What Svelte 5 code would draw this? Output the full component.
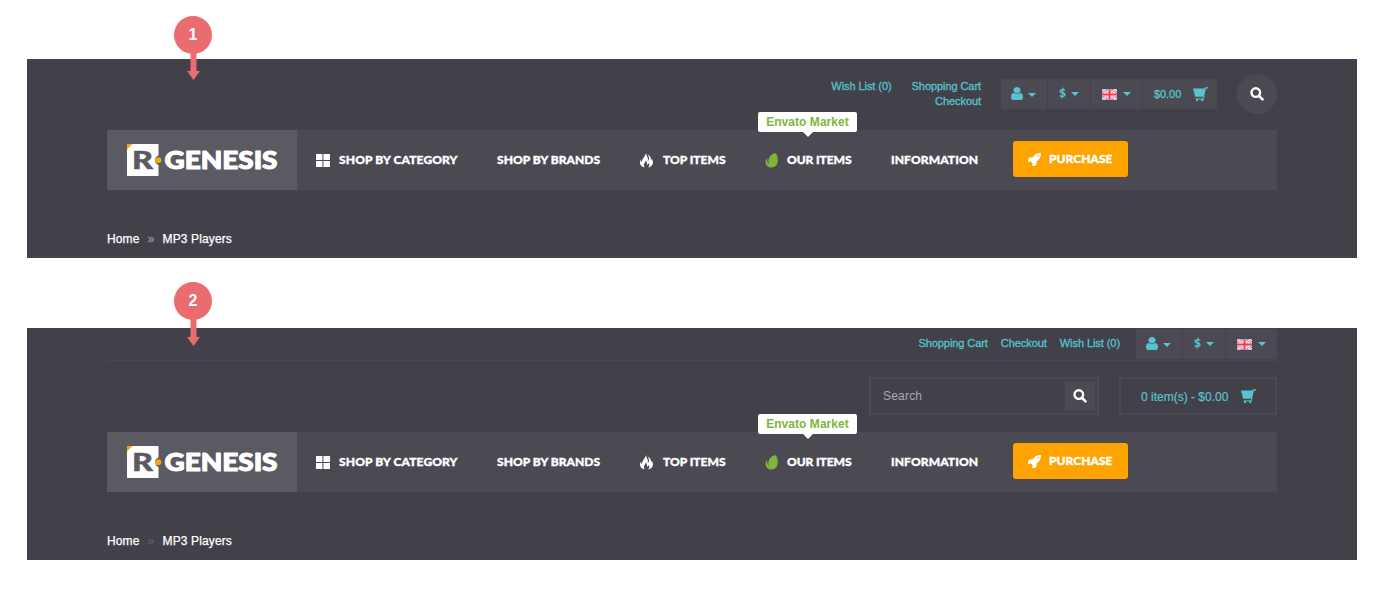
<script>
  const panels = [
    { id: 1, compact: true },
    { id: 2, compact: false }
  ];
  const nav = [
    { label: 'SHOP BY CATEGORY', icon: 'grid', width: 180, text: 118.500 },
    { label: 'SHOP BY BRANDS', width: 143, text: 103 },
    { label: 'TOP ITEMS', icon: 'fire', width: 125, text: 62.500 },
    { label: 'OUR ITEMS', icon: 'leaf', width: 126, text: 64.500, badge: 'Envato Market' },
    { label: 'INFORMATION', width: 127, text: 87 }
  ];
</script>

{#snippet search()}
  <svg class="search-icon" viewBox="0 0 14 14" width="14" height="14"><circle cx="5.800" cy="5.600" r="4.300" fill="none" stroke="#fff" stroke-width="2.400" /><path d="m9 8.900 3.500 3.500" stroke="#fff" stroke-width="2.700" stroke-linecap="round" /></svg>
{/snippet}

{#snippet cart()}
  <svg class="cart" viewBox="0 0 15 15" width="15" height="15">
    <path d="M0 1.500h11.300L12 .2h3v1.200h-2.100L11 9.800H2.200z" fill="#56c3ce" />
    <path d="M11 9 10.300 11.900H2.800" fill="none" stroke="#56c3ce" />
    <circle cx="4" cy="13" r="1.200" fill="#56c3ce" /><circle cx="9.300" cy="13" r="1.200" fill="#56c3ce" />
  </svg>
{/snippet}

{#snippet cells(compact)}
  <div class="cells">
    <div class="cell user">
      <svg viewBox="256 128 1280 1536" width="12" height="13" preserveAspectRatio="none"><path fill="#56c3ce" d="M1536 1399q0 109-62.500 187t-150.500 78h-854q-88 0-150.500-78t-62.500-187q0-85 8.500-160.500t31.500-152 58.500-131 94-89 134.500-34.500q131 128 313 128t313-128q76 0 134.500 34.500t94 89 58.500 131 31.500 152 8.500 160.500zm-256-887q0 159-112.500 271.500t-271.500 112.500-271.500-112.500-112.500-271.500 112.500-271.500 271.500-112.500 271.500 112.500 112.500 271.500z" /></svg>
      <i class="caret"></i>
    </div>
    <div class="cell money"><b>$</b><i class="caret"></i></div>
    <div class="cell lang">
      <svg class="flag" viewBox="0 0 15 11" width="15" height="11">
        <path fill="#8791dc" d="M0 0h15v11H0z" />
        <path stroke="#fff" stroke-width="2.600" d="m0 0 15 11M15 0 0 11" />
        <path stroke="#f56a70" stroke-width="1" d="m0 0 15 11M15 0 0 11" />
        <path stroke="#fde4e6" stroke-width="3.600" d="M7.500 0v11M0 5.500h15" />
        <path stroke="#fb3a40" stroke-width="2" d="M7.500 0v11M0 5.500h15" />
      </svg>
      <i class="caret"></i>
    </div>
    {#if compact}
      <div class="cell total"><span>$0.00</span>{@render cart()}</div>
    {/if}
  </div>
{/snippet}

{#snippet navIcon(name)}
  {#if name === 'grid'}
    <svg class="icon" viewBox="0 0 14 13" width="14" height="13"><path fill="#fff" d="M0 0h6.400v6H0zM7.400 0H14v6H7.400zM0 7h6.400v6H0zM7.400 7H14v6H7.400z" /></svg>
  {:else if name === 'fire'}
    <svg class="icon" viewBox="0 0 14 15" width="14" height="15"><path fill="#fff" d="M6.300 0c-.4 2.500 1.400 3.600 1.600 5.800.1 1-.1 1.800-.5 2.500 1.600-.9 2-2.900 1.200-4.700-.4-.9-.3-1.500 0-2 .4 1.400 2 2 2.300 3.700.1.800 0 1.400-.2 2 .8-.4 1.200-1 1.100-1.900 1.600 3 1.500 5.600-.3 7.400-1 1-2.300 1.600-3.700 1.800 1.600-1.200 2-3 1.100-4.700-.5 1-1.100 1.500-2.100 1.700.5-1.900.1-3.100-1.300-4.200.1 1.800-1 2.300-1.500 3.500-.5 1.300 0 2.500 1.200 3.400C2.500 14 .4 12.800.1 10.400-.1 9 .2 7.700.9 6.600c0 1.200.3 1.900 1 2.300 0-2 .9-3.200 1.900-4.500C4.900 3 5.300 1.600 6.300 0z" /></svg>
  {:else}
    <svg class="icon leaf" viewBox="0 0 14 15" width="14" height="15"><path fill="#80b53c" d="M10.700.4C8.700-.6 4.800 2.800 4 5c-.6 1.600-.8 3.500-.4 5.200.1.400-.2.500-.4.200C2.300 9.100 2 7.300 2.200 5.500c0-.4-.2-.5-.5-.1C.7 6.700.3 8.300.6 9.800c.5 3.100 2.900 4.900 6.100 4.800 3.400-.1 5.600-2.500 6-6C13.100 5.400 12.100 1.300 10.700.4z" /></svg>
  {/if}
{/snippet}

{#snippet navText(label, width)}
  <svg class="label" {width} height="16"><text x="0" y="12" textLength={width}>{label}</text></svg>
{/snippet}

<main>
  {#each panels as panel (panel.id)}
    <section class="panel" class:compact={panel.compact}>
      <div class="marker">
        <span>{panel.id}</span>
        <svg viewBox="0 0 13 28" width="13" height="28"><path fill="#ea6c6f" d="M3.500 0h6v19H13l-6.500 9L0 19h3.500z" /></svg>
      </div>
      <div class="inner">
        {#if panel.compact}
          <header class="top-compact">
            <span class="link">Wish List (0)</span>
            <div class="stack"><span class="link">Shopping Cart</span><span class="link">Checkout</span></div>
            {@render cells(true)}
            <div class="round">{@render search()}</div>
          </header>
        {:else}
          <header class="top-wide">
            <span class="link">Shopping Cart</span><span class="link">Checkout</span><span class="link">Wish List (0)</span>
            {@render cells(false)}
          </header>
          <div class="tools">
            <div class="searchbox"><span>Search</span><div class="go">{@render search()}</div></div>
            <div class="basket"><span>0 item(s) - $0.00</span>{@render cart()}</div>
          </div>
        {/if}
        <nav>
          <div class="logo">
            <svg viewBox="0 0 152 34" width="152" height="34">
              <path fill="#fff" d="M0 0h31.500v11.600a4.900 4.900 0 0 0 0 9.300V32H0z" />
              <path fill="#faa30c" d="M0 0h5.500L0 5.500z" />
              <text class="r" x="5" y="25" textLength="21" lengthAdjust="spacingAndGlyphs">R</text>
              <circle cx="31.300" cy="16.200" r="3" fill="#fba506" />
              <text class="word" x="37.500" y="25" textLength="113" lengthAdjust="spacingAndGlyphs">GENESIS</text>
            </svg>
          </div>
          {#each nav as item}
            <div class="item" style:width="{item.width}px">
              {#if item.icon}{@render navIcon(item.icon)}{/if}
              {@render navText(item.label, item.text)}
              {#if item.badge}<div class="badge">{item.badge}</div>{/if}
            </div>
          {/each}
          <div class="purchase">
            <svg viewBox="128 128 1536 1536" width="13" height="13"><path fill="#fff" d="M1440 448q0-40-28-68t-68-28-68 28-28 68 28 68 68 28 68-28 28-68zm224-288q0 249-75.500 430.500t-253.500 360.500q-81 80-195 176l-20 379q-2 16-16 26l-384 224q-7 4-16 4-12 0-23-9l-64-64q-13-14-8-32l85-276-281-281-276 85q-3 1-9 1-14 0-23-9l-64-64q-17-19-5-39l224-384q10-14 26-16l379-20q96-114 176-195 188-187 358-258t431-71q14 0 24 9.500t10 22.500z" /></svg>
            {@render navText('PURCHASE', 63.500)}
          </div>
        </nav>
        <div class="crumbs"><span>Home</span><em>»</em><span>MP3 Players</span></div>
      </div>
    </section>
  {/each}
</main>

<style>
  :global(body) { background: #fff; }
  main { box-sizing: border-box; height: 591px; padding: 59px 31px 0 27px; overflow: hidden; font-family: "Liberation Sans", Arial, sans-serif; display: flex; flex-direction: column; gap: 70px; }
  svg { display: block; flex: none; }
  .panel { position: relative; flex: none; height: 232px; background: #42414a; }
  .panel.compact { height: 199px; }
  .inner { width: 1170px; margin: 0 auto; }
  .marker { position: absolute; left: 147px; top: -46px; width: 38px; display: flex; flex-direction: column; align-items: center; }
  .compact .marker { top: -43px; }
  .marker span { width: 38px; height: 38px; border-radius: 50%; background: #ea6c6f; color: #fff; font: bold 16px/37px "Liberation Sans", Arial, sans-serif; text-align: center; }
  .marker svg { margin: -2px 0 0 1px; }
  .link { color: #56c3ce; font-size: 11px; line-height: 15px; letter-spacing: -.07px; white-space: nowrap; -webkit-text-stroke: .3px #56c3ce; }

  .top-compact { display: flex; justify-content: flex-end; align-items: flex-start; height: 71px; box-sizing: border-box; padding-top: 20px; }
  .stack { display: flex; flex-direction: column; align-items: flex-end; margin-left: 20px; }
  .top-compact .cells { margin-left: 20px; }
  .round { width: 40px; height: 40px; margin: -5px 0 0 20px; border-radius: 50%; background: #4b4a53; display: flex; align-items: center; justify-content: center; }
  .top-wide { height: 33px; box-sizing: border-box; border-bottom: 1px solid #4b4a53; display: flex; justify-content: flex-end; gap: 13px; padding-top: 1px; }
  .top-wide .link { line-height: 29px; }
  .top-wide .cells { margin-left: 3px; }

  .cells { display: flex; gap: 1px; height: 30px; }
  .cell { box-sizing: border-box; height: 30px; background: #4b4a53; display: flex; align-items: center; color: #56c3ce; }
  .user { width: 46px; padding: 0 0 2px 10px; }
  .money { width: 42px; padding-left: 11px; }
  .money b { font: 900 12px/30px Lato, sans-serif; width: 7px; margin-top: -3px; }
  .lang { width: 51px; padding-left: 11px; }
  .top-wide .lang { padding-left: 11px; }
  .total { width: 74px; padding-left: 11px; font-size: 11px; letter-spacing: -.07px; -webkit-text-stroke: .3px #56c3ce; }
  .total span { width: 39px; }
  .caret { border: 4px solid transparent; border-top-color: #56c3ce; border-bottom: 0; margin-left: 6px; }
  .user .caret { margin: 4px 0 0 5px; }
  .money .caret { margin-left: 5px; }
  .lang .caret { margin-left: 6px; }

  .tools { display: flex; justify-content: flex-end; gap: 20px; padding: 16px 0 17px; }
  .searchbox, .basket { box-sizing: border-box; height: 38px; border: 2px solid #4b4a53; display: flex; align-items: center; }
  .searchbox { width: 230px; padding: 0 2px 0 12px; justify-content: space-between; color: #a9a8aa; font-size: 12px; letter-spacing: .2px; }
  .go { width: 30px; height: 30px; background: #4b4a53; display: flex; align-items: center; justify-content: center; }
  .basket { width: 158px; padding-left: 20px; color: #56c3ce; font-size: 12px; -webkit-text-stroke: .2px #56c3ce; }
  .basket span { width: 100px; white-space: nowrap; padding-top: 2px; }

  nav { height: 60px; background: #4b4a53; display: flex; }
  .logo { width: 190px; height: 60px; box-sizing: border-box; padding: 14px 0 0 20px; background: #5b5a62; }
  .r { font: 900 25px Lato, sans-serif; fill: #5b5a62; stroke: #5b5a62; stroke-width: .5px; }
  .word { font: 900 25px Lato, sans-serif; fill: #fff; stroke: #fff; stroke-width: 1.1px; stroke-linejoin: round; }
  .item { position: relative; box-sizing: border-box; height: 60px; padding-left: 20px; display: flex; align-items: center; }
  .item:nth-child(2) { padding-left: 19px; }
  .icon { margin-right: 8.500px; }
  .leaf { margin-top: 1px; margin-right: 8px; }
  .label { overflow: visible; }
  .label text { font: 900 12px Lato, sans-serif; fill: #fff; stroke: #fff; stroke-width: .35px; }
  .badge { position: absolute; left: 13px; top: -18px; width: 99px; height: 20px; border-radius: 2px; background: #fff; color: #80b53c; font: bold 12px/20px "Liberation Sans", Arial, sans-serif; letter-spacing: .05px; text-align: center; white-space: nowrap; }
  .badge::after { content: ""; position: absolute; left: 45px; top: 20px; border: 5px solid transparent; border-top-color: #fff; border-bottom: 0; }
  .purchase { width: 115px; height: 36px; box-sizing: border-box; margin: 11px 0 0 15px; padding-left: 15px; border-radius: 3px; background: #ffa300; display: flex; align-items: center; gap: 8px; }
  .crumbs { padding-top: 42px; display: flex; color: #fff; font-size: 12px; line-height: 14px; letter-spacing: .13px; -webkit-text-stroke: .25px #fff; }
  .crumbs em { width: 23px; text-align: center; font-style: normal; color: #99989d; -webkit-text-stroke: .25px #99989d; }
  .panel:not(.compact) .crumbs em { color: #65646b; -webkit-text-stroke: 0; }
</style>
